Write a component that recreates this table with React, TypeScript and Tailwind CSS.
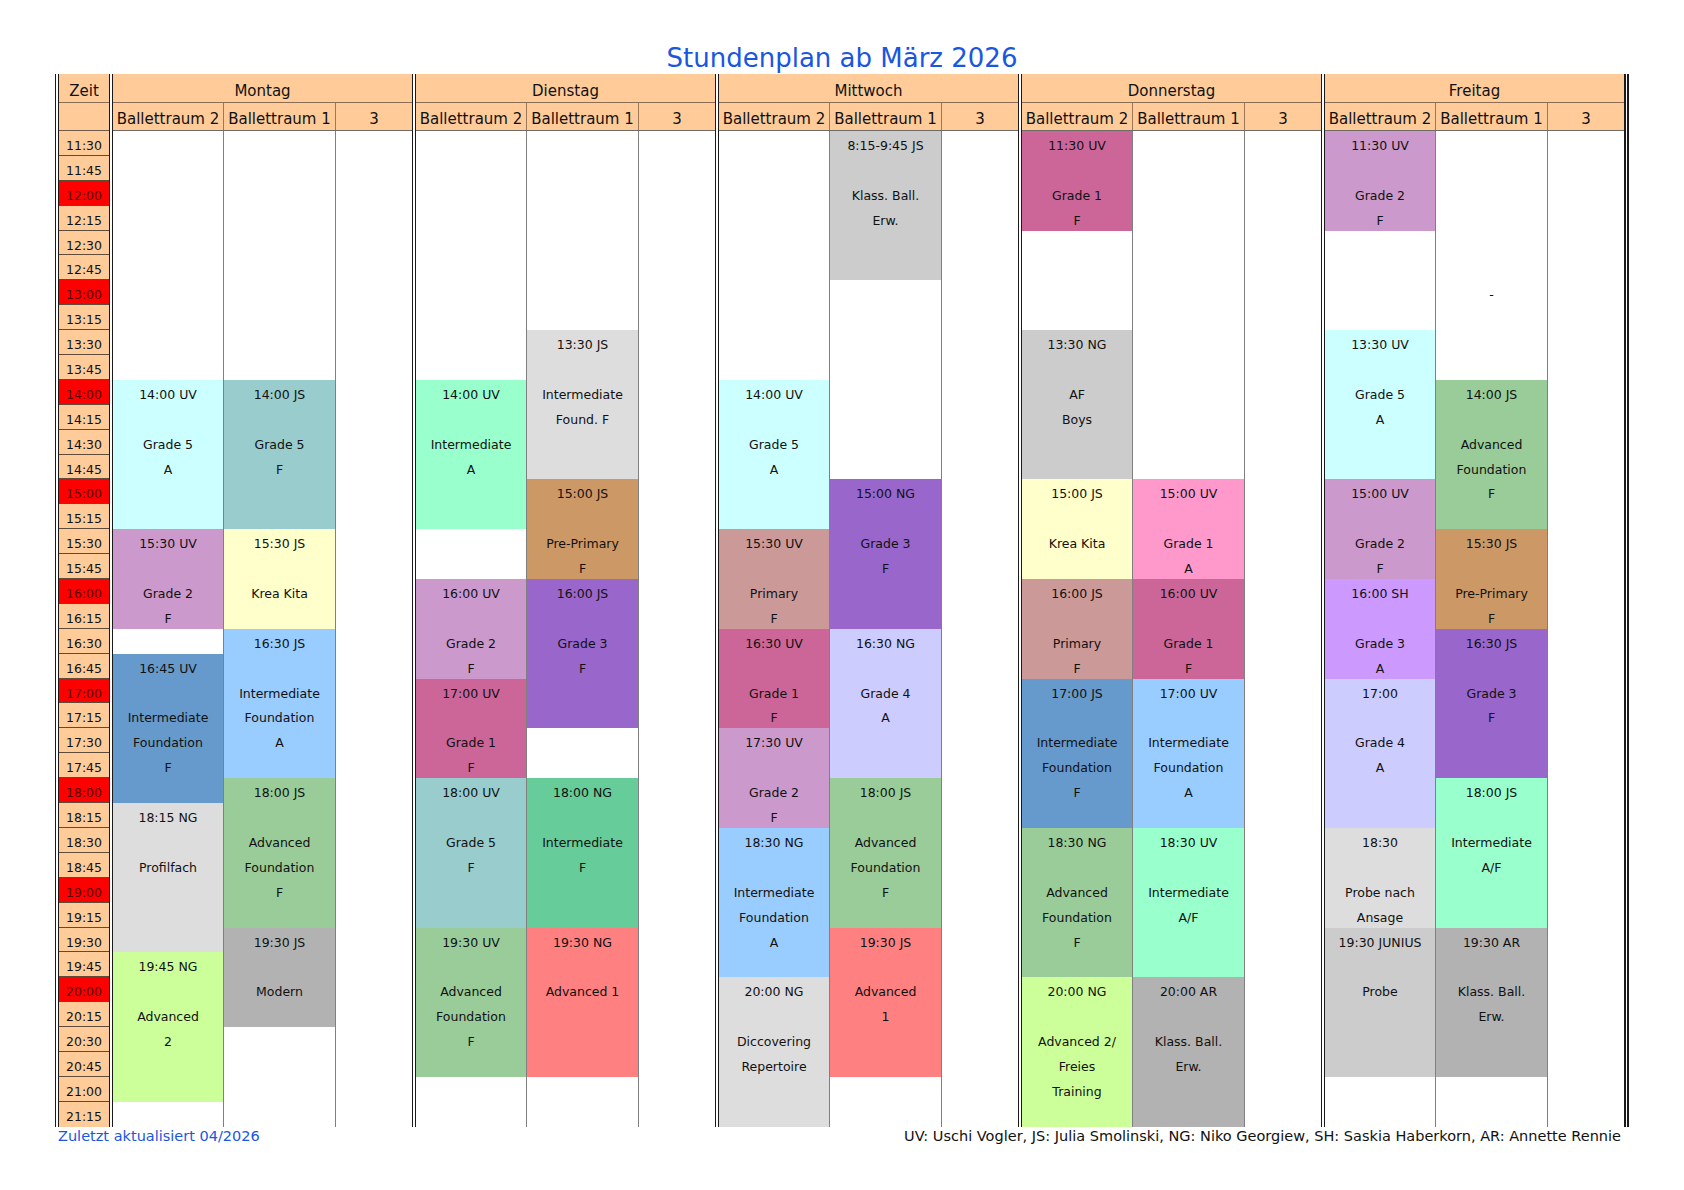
import React from "react";

type Block = { start: number; span: number; bg: string; lines: string[] };

const b = (start: number, span: number, bg: string, ...lines: string[]): Block => ({
  start,
  span,
  bg,
  lines,
});

const ROWS = 40;

type Day = { name: string; cols: Block[][] };

const days: Day[] = [
  {
    name: "Montag",
    cols: [
      [
        b(10, 6, "bg-[#ccffff]", "14:00 UV", "", "Grade 5", "A"),
        b(16, 4, "bg-[#cc99cc]", "15:30 UV", "", "Grade 2", "F"),
        b(21, 6, "bg-[#6699cc]", "16:45 UV", "", "Intermediate", "Foundation", "F"),
        b(27, 6, "bg-[#dddddd]", "18:15 NG", "", "Profilfach"),
        b(33, 6, "bg-[#ccff99]", "19:45 NG", "", "Advanced", "2"),
      ],
      [
        b(10, 6, "bg-[#99cccc]", "14:00 JS", "", "Grade 5", "F"),
        b(16, 4, "bg-[#ffffcc]", "15:30 JS", "", "Krea Kita"),
        b(20, 6, "bg-[#99ccff]", "16:30 JS", "", "Intermediate", "Foundation", "A"),
        b(26, 6, "bg-[#99cc99]", "18:00 JS", "", "Advanced", "Foundation", "F"),
        b(32, 4, "bg-[#b2b2b2]", "19:30 JS", "", "Modern"),
      ],
      [],
    ],
  },
  {
    name: "Dienstag",
    cols: [
      [
        b(10, 6, "bg-[#99ffcc]", "14:00 UV", "", "Intermediate", "A"),
        b(18, 4, "bg-[#cc99cc]", "16:00 UV", "", "Grade 2", "F"),
        b(22, 4, "bg-[#cc6699]", "17:00 UV", "", "Grade 1", "F"),
        b(26, 6, "bg-[#99cccc]", "18:00 UV", "", "Grade 5", "F"),
        b(32, 6, "bg-[#99cc99]", "19:30 UV", "", "Advanced", "Foundation", "F"),
      ],
      [
        b(8, 6, "bg-[#dddddd]", "13:30 JS", "", "Intermediate", "Found. F"),
        b(14, 4, "bg-[#cc9966]", "15:00 JS", "", "Pre-Primary", "F"),
        b(18, 6, "bg-[#9966cc]", "16:00 JS", "", "Grade 3", "F"),
        b(26, 6, "bg-[#66cc99]", "18:00 NG", "", "Intermediate", "F"),
        b(32, 6, "bg-[#ff8080]", "19:30 NG", "", "Advanced 1"),
      ],
      [],
    ],
  },
  {
    name: "Mittwoch",
    cols: [
      [
        b(10, 6, "bg-[#ccffff]", "14:00 UV", "", "Grade 5", "A"),
        b(16, 4, "bg-[#cc9999]", "15:30 UV", "", "Primary", "F"),
        b(20, 4, "bg-[#cc6699]", "16:30 UV", "", "Grade 1", "F"),
        b(24, 4, "bg-[#cc99cc]", "17:30 UV", "", "Grade 2", "F"),
        b(28, 6, "bg-[#99ccff]", "18:30 NG", "", "Intermediate", "Foundation", "A"),
        b(34, 6, "bg-[#dddddd]", "20:00 NG", "", "Diccovering", "Repertoire"),
      ],
      [
        b(0, 6, "bg-[#cccccc]", "8:15-9:45 JS", "", "Klass. Ball.", "Erw."),
        b(14, 6, "bg-[#9966cc]", "15:00 NG", "", "Grade 3", "F"),
        b(20, 6, "bg-[#ccccff]", "16:30 NG", "", "Grade 4", "A"),
        b(26, 6, "bg-[#99cc99]", "18:00 JS", "", "Advanced", "Foundation", "F"),
        b(32, 6, "bg-[#ff8080]", "19:30 JS", "", "Advanced", "1"),
      ],
      [],
    ],
  },
  {
    name: "Donnerstag",
    cols: [
      [
        b(0, 4, "bg-[#cc6699]", "11:30 UV", "", "Grade 1", "F"),
        b(8, 6, "bg-[#cccccc]", "13:30 NG", "", "AF", "Boys"),
        b(14, 4, "bg-[#ffffcc]", "15:00 JS", "", "Krea Kita"),
        b(18, 4, "bg-[#cc9999]", "16:00 JS", "", "Primary", "F"),
        b(22, 6, "bg-[#6699cc]", "17:00 JS", "", "Intermediate", "Foundation", "F"),
        b(28, 6, "bg-[#99cc99]", "18:30 NG", "", "Advanced", "Foundation", "F"),
        b(34, 6, "bg-[#ccff99]", "20:00 NG", "", "Advanced 2/", "Freies", "Training"),
      ],
      [
        b(14, 4, "bg-[#ff99cc]", "15:00 UV", "", "Grade 1", "A"),
        b(18, 4, "bg-[#cc6699]", "16:00 UV", "", "Grade 1", "F"),
        b(22, 6, "bg-[#99ccff]", "17:00 UV", "", "Intermediate", "Foundation", "A"),
        b(28, 6, "bg-[#99ffcc]", "18:30 UV", "", "Intermediate", "A/F"),
        b(34, 6, "bg-[#b2b2b2]", "20:00 AR", "", "Klass. Ball.", "Erw."),
      ],
      [],
    ],
  },
  {
    name: "Freitag",
    cols: [
      [
        b(0, 4, "bg-[#cc99cc]", "11:30 UV", "", "Grade 2", "F"),
        b(8, 6, "bg-[#ccffff]", "13:30 UV", "", "Grade 5", "A"),
        b(14, 4, "bg-[#cc99cc]", "15:00 UV", "", "Grade 2", "F"),
        b(18, 4, "bg-[#cc99ff]", "16:00 SH", "", "Grade 3", "A"),
        b(22, 6, "bg-[#ccccff]", "17:00", "", "Grade 4", "A"),
        b(28, 4, "bg-[#dddddd]", "18:30", "", "Probe nach", "Ansage"),
        b(32, 6, "bg-[#cccccc]", "19:30 JUNIUS", "", "Probe"),
      ],
      [
        b(6, 1, "bg-white", "-"),
        b(10, 6, "bg-[#99cc99]", "14:00 JS", "", "Advanced", "Foundation", "F"),
        b(16, 4, "bg-[#cc9966]", "15:30 JS", "", "Pre-Primary", "F"),
        b(20, 6, "bg-[#9966cc]", "16:30 JS", "", "Grade 3", "F"),
        b(26, 6, "bg-[#99ffcc]", "18:00 JS", "", "Intermediate", "A/F"),
        b(32, 6, "bg-[#b2b2b2]", "19:30 AR", "", "Klass. Ball.", "Erw."),
      ],
      [],
    ],
  },
];

const colClass = [
  "w-[110px]",
  "w-[112px] border-l border-[#808080]",
  "w-[77px] border-l border-[#808080]",
];

const headClass = [
  "w-[110px]",
  "w-[112px] border-l border-[#9a7858]",
  "w-[77px] border-l border-[#9a7858]",
];

const rooms = ["Ballettraum 2", "Ballettraum 1", "3"];

const Cell: React.FC<{ text?: string }> = ({ text }) => (
  <div className="h-[24.9px] overflow-hidden whitespace-nowrap text-center leading-[29px]">
    {text}
  </div>
);

const SubColumn: React.FC<{ blocks: Block[]; className: string }> = ({ blocks, className }) => {
  const items: React.ReactNode[] = [];
  let r = 0;
  while (r < ROWS) {
    const blk = blocks.find((x) => x.start === r);
    if (blk) {
      items.push(
        <div key={r} className={blk.bg}>
          {Array.from({ length: blk.span }, (_, i) => (
            <Cell key={i} text={blk.lines[i]} />
          ))}
        </div>
      );
      r += blk.span;
    } else {
      items.push(<Cell key={r} />);
      r += 1;
    }
  }
  return <div className={`flex flex-col ${className}`}>{items}</div>;
};

const times = Array.from({ length: ROWS }, (_, i) => {
  const total = 11 * 60 + 30 + i * 15;
  const h = Math.floor(total / 60);
  const m = total % 60;
  return { label: `${h}:${m === 0 ? "00" : m}`, red: m === 0 && h <= 20 };
});

const App: React.FC = () => {
  return (
    <div className="w-[1684px] h-[1190px] bg-white text-[#111] font-['DejaVu_Sans',sans-serif]">
      <h1 className="pt-[43px] mb-px text-center text-[26px] leading-[30px] text-[#1a56e0]">
        Stundenplan ab März 2026
      </h1>

      <div className="w-[1574px] mx-auto">
        <div className="flex text-[12.5px]">
          {/* Zeit column */}
          <div className="w-[58px] shrink-0 border-x-4 border-double border-[#1a1a1a]">
            <div className="h-[29px] bg-[#ffcc99] border-b border-[#8a6d52] text-center text-[15px] leading-[34px] overflow-hidden">
              Zeit
            </div>
            <div className="h-[28px] bg-[#ffcc99] border-b border-[#6e5a48]" />
            {times.map((t, i) => (
              <div
                key={t.label}
                className={`h-[24.9px] overflow-hidden text-center leading-[29px] ${
                  i < ROWS - 1 ? "border-b border-[#5e4b3a]" : ""
                } ${t.red ? "bg-[#ff0000] text-[#5a0000]" : "bg-[#ffcc99]"}`}
              >
                {t.label}
              </div>
            ))}
          </div>

          {days.map((day, di) => (
            <div
              key={day.name}
              className={`shrink-0 border-double border-[#1a1a1a] ${
                di === days.length - 1 ? "border-r-[5px]" : "border-r-4"
              }`}
            >
              <div className="h-[29px] bg-[#ffcc99] border-b border-[#8a6d52] text-center text-[15px] leading-[34px] overflow-hidden">
                {day.name}
              </div>
              <div className="flex h-[28px] bg-[#ffcc99] border-b border-[#6e6a66]">
                {rooms.map((room, ri) => (
                  <div
                    key={room}
                    className={`${headClass[ri]} overflow-hidden whitespace-nowrap text-center text-[15px] leading-[32px]`}
                  >
                    {room}
                  </div>
                ))}
              </div>
              <div className="flex">
                {day.cols.map((blocks, ci) => (
                  <SubColumn key={ci} blocks={blocks} className={colClass[ci]} />
                ))}
              </div>
            </div>
          ))}
        </div>

        <div className="mt-px flex justify-between leading-[17px] text-[14.5px]">
          <span className="pl-[3px] text-[#1a56e0]">Zuletzt aktualisiert 04/2026</span>
          <span className="pr-[8px]">
            UV: Uschi Vogler, JS: Julia Smolinski, NG: Niko Georgiew, SH: Saskia Haberkorn, AR: Annette Rennie
          </span>
        </div>
      </div>
    </div>
  );
};

export default App;
